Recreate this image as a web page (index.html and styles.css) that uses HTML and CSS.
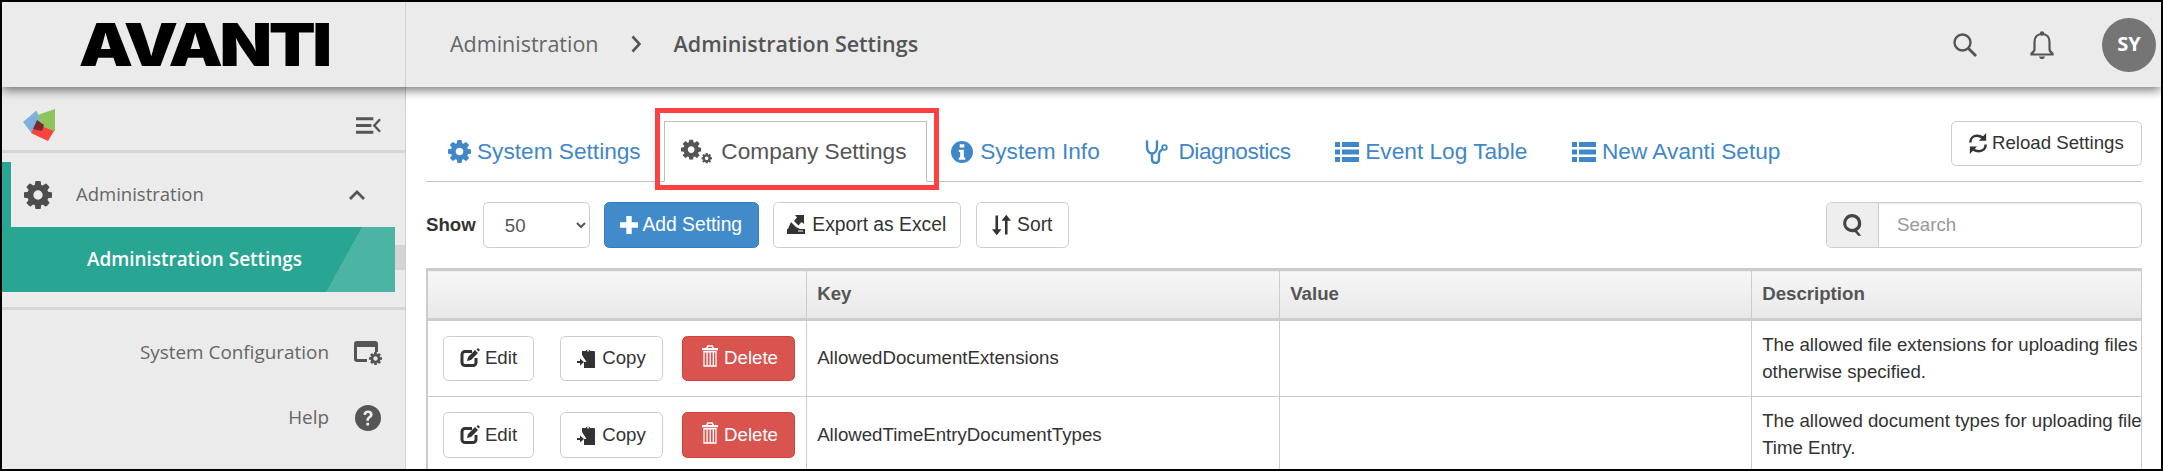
FILE: index.html
```html
<!DOCTYPE html>
<html lang="en">
<head>
<meta charset="utf-8">
<title>Administration Settings</title>
<link rel="stylesheet" href="styles.css">
</head>
<body>
<svg class="sprite" aria-hidden="true">
  <symbol id="i-cog" viewBox="128 128 1536 1536"><path fill-rule="evenodd" d="M1152 896q0-106-75-181t-181-75-181 75-75 181 75 181 181 75 181-75 75-181zm512-109v222q0 12-8 23t-20 13l-185 28q-19 54-39 91 35 50 107 138 10 12 10 25t-9 23q-27 37-99 108t-94 71q-12 0-26-9l-138-108q-44 23-91 38-16 136-29 186-7 28-36 28h-222q-14 0-24.500-8.500t-11.500-21.500l-28-184q-49-16-90-37l-141 107q-10 9-25 9-14 0-25-11-126-114-165-168-7-10-7-23 0-12 8-23 15-21 51-66.500t54-70.500q-27-50-41-99l-183-27q-13-2-21-12.500t-8-23.500v-222q0-12 8-23t19-13l186-28q14-46 39-92-40-57-107-138-10-12-10-24 0-10 9-23 26-36 98.500-107.500t94.500-71.500q13 0 26 10l138 107q44-23 91-38 16-136 29-186 7-28 36-28h222q14 0 24.500 8.500t11.500 21.500l28 184q49 16 90 37l142-107q9-9 24-9 13 0 25 10 129 119 165 170 7 8 7 22 0 12-8 23-15 21-51 66.500t-54 70.500q26 50 41 98l183 28q13 2 21 12.500t8 23.500z"/></symbol>
  <symbol id="i-cogs" viewBox="0 0 32 25"><use href="#i-cog" x="0" y="0" width="21" height="21"/><use href="#i-cog" x="21" y="14" width="11" height="11"/></symbol>
  <symbol id="i-list" viewBox="0 0 24 22"><path d="M0 1h5v5H0zM7 1h17v5H7zM0 8.500h5v5H0zM7 8.500h17v5H7zM0 16h5v5H0zM7 16h17v5H7z"/></symbol>
  <symbol id="i-info" viewBox="0 0 24 24"><path fill-rule="evenodd" d="M12 0a12 12 0 1 1 0 24a12 12 0 0 1 0-24zM9.500 3.500v3.500h5V3.500zM8.500 9.500v2.500h1.500v6H8.500v2.500h7V18H14V9.500z"/></symbol>
  <symbol id="i-steth" viewBox="0 0 23 24"><path fill="none" stroke="currentColor" stroke-width="2.400" stroke-linecap="round" d="M2 1.500v5c0 4 2 7 5 7s5-3 5-7v-5M7 13.500v5c0 3 1.500 4.500 3.500 4.500s3.500-1.500 3.500-4.500v-4.500c0-2 1-3 2.500-4"/><circle cx="19.500" cy="7.500" r="2.300" fill="none" stroke="currentColor" stroke-width="1.800"/></symbol>
  <symbol id="i-plus" viewBox="0 0 20 20"><path d="M7 0h6v7h7v6h-7v7H7v-7H0V7h7z"/></symbol>
  <symbol id="i-export" viewBox="0 0 18 19"><path fill-rule="evenodd" d="M0 14h18v5H0zM11 15.500v1h5v-1z"/><path d="M1 14l3-7 5 5 4 2zM8 0h9v9l-2.500-2-3 3.500-4.500-4.500 3-3.500z"/></symbol>
  <symbol id="i-sort" viewBox="0 0 22 24"><path d="M4 1h3v16h4l-5.500 7L0 17h4zM15 7h-4l5.500-7L22 7h-4v16h-3z"/></symbol>
  <symbol id="i-reload" viewBox="0 0 20 24"><path fill="none" stroke="currentColor" stroke-width="2.600" d="M2 11c0-4.500 3-7 7-7c3 0 5 1 7 3M18 13c0 4.500-3 7-7 7c-3 0-5-1-7-3"/><path d="M18.500 1v8h-7.500zM1.500 23v-8H9z"/></symbol>
  <symbol id="i-glass" viewBox="0 0 22 24"><path fill-rule="evenodd" d="M10 0a10 10 0 0 1 5.500 18.300L20 23.500l-3 .5-4-4.400A10 10 0 1 1 10 0zm0 3.500a6.500 6.500 0 1 0 0 13a6.500 6.500 0 0 0 0-13z"/></symbol>
  <symbol id="i-edit" viewBox="0 0 20 20"><path fill="none" stroke="currentColor" stroke-width="3" d="M12 3.500H5A3 3 0 0 0 2 6.500v8A3 3 0 0 0 5 17.500h8a3 3 0 0 0 3-3V10"/><path d="M7 13l1-4L15 2l3 3-7 7zM18 0l2 2-1.500 1.500-2-2z"/></symbol>
  <symbol id="i-copy" viewBox="0 0 18 20"><path d="M5 3h3.500a3 3 0 0 1 5 0H17a1 1 0 0 1 1 1v16H7v-6h2.500L5 7z"/><path fill="#fff" d="M10.300 2h1.600v1.500h-1.600z"/><path d="M0 13h3v-2.500l4 3.500-4 3.500V15H0z"/></symbol>
  <symbol id="i-trash" viewBox="0 0 18 24"><path fill-rule="evenodd" d="M6 0h6l1.500 3H18v2.500H0V3h4.500zM7 1.500L6.300 3h5.400L11 1.500zM1.500 6.500h15V24h-15zM3 8v14.500h2V8zm3.500 0v14.500h2V8zm3.500 0v14.500h2V8zm3.500 0v14.500h1.500V8z"/></symbol>
</svg>

<div class="frame">
  <header class="topbar">
    <div class="brand"><span class="wordmark">AVANTI</span></div>
    <nav class="crumbs">
      <span class="crumb">Administration</span>
      <svg class="crumb-sep" viewBox="0 0 10 18"><path d="M1.500 1.500L8.500 9l-7 7.500" fill="none" stroke="currentColor" stroke-width="2.600"/></svg>
      <span class="crumb-current">Administration Settings</span>
    </nav>
    <div class="top-actions">
      <svg class="top-search" viewBox="0 0 24 24"><circle cx="9.500" cy="9.500" r="8" fill="none" stroke="currentColor" stroke-width="2.400"/><path d="M15.500 15.500L23 23" stroke="currentColor" stroke-width="2.800" fill="none"/></svg>
      <svg class="top-bell" viewBox="0 0 24 28"><path d="M12 3c-5 0-7.500 3.500-7.500 8v7c0 2-1.500 3.500-3 4.500v1h21v-1c-1.500-1-3-2.500-3-4.500v-7c0-4.500-2.500-8-7.500-8z" fill="none" stroke="currentColor" stroke-width="2.200"/><circle cx="12" cy="2.500" r="2.200"/><path d="M9 25.500h6c-.5 2-1.500 2.500-3 2.500s-2.500-.5-3-2.500z"/></svg>
      <span class="avatar">SY</span>
    </div>
  </header>

  <div class="body">
    <aside class="sidebar">
      <div class="side-top">
        <svg class="mark" viewBox="0 0 32 32">
          <path d="M13.500 1.500L0 13l8.500 11 10-11z" fill="#7db0dc"/>
          <path d="M14.500 6L32 0l0 22-10 1z" fill="#8fc45c"/>
          <path d="M13 15l18 7-6 10-17-8z" fill="#f8453d"/>
          <path d="M14 11l7 5-2 6-9-2z" fill="#7a2a2c"/>
        </svg>
        <svg class="collapse" viewBox="0 0 26 17"><path d="M0 1.500h18M0 8.500h16M0 15.500h18" stroke="currentColor" stroke-width="3" fill="none"/><path d="M25 2l-6 6.500 6 6.500" stroke="currentColor" stroke-width="2.400" fill="none"/></svg>
      </div>
      <div class="side-group">
        <div class="side-item">
          <svg class="side-cog"><use href="#i-cog"/></svg>
          <span class="side-label">Administration</span>
          <svg class="side-caret" viewBox="0 0 16 10"><path d="M1 9l7-7 7 7" fill="none" stroke="currentColor" stroke-width="2.800"/></svg>
        </div>
        <div class="side-sub">
          <span class="side-sub-label">Administration Settings</span>
        </div>
        <span class="side-thumb"></span>
      </div>
      <div class="side-links">
        <div class="side-link">
          <span>System Configuration</span>
          <svg class="side-link-icon" viewBox="0 0 28 24"><path d="M3 0h18a3 3 0 0 1 3 3v8h-3V6H3v12h10v3H3a3 3 0 0 1-3-3V3a3 3 0 0 1 3-3z"/><use href="#i-cog" x="15" y="11" width="13" height="13"/></svg>
        </div>
        <div class="side-link">
          <span>Help</span>
          <svg class="side-link-icon" viewBox="0 0 28 28"><circle cx="14" cy="14" r="14"/><path d="M9 10.500c.3-3 2.300-4.500 5-4.500 3 0 5 1.700 5 4.200 0 3.600-4 3.500-4 6.800h-2.800c0-4.500 3.800-4.400 3.800-6.700 0-1-.8-1.700-2-1.700s-1.800.7-2.100 2.200zM12.200 19h3v3h-3z" fill="#ebebeb"/></svg>
        </div>
      </div>
    </aside>

    <main class="content">
      <div class="tabbar">
        <ul class="tabs">
          <li class="tab"><svg class="ti ti-cog"><use href="#i-cog"/></svg>System Settings</li>
          <li class="tab tab-active"><svg class="ti ti-cogs"><use href="#i-cogs"/></svg>Company Settings</li>
          <li class="tab"><svg class="ti ti-info"><use href="#i-info"/></svg>System Info</li>
          <li class="tab tab-tight"><svg class="ti ti-steth"><use href="#i-steth"/></svg>Diagnostics</li>
          <li class="tab"><svg class="ti ti-list"><use href="#i-list"/></svg>Event Log Table</li>
          <li class="tab"><svg class="ti ti-list"><use href="#i-list"/></svg>New Avanti Setup</li>
        </ul>
        <button class="btn btn-reload"><svg class="bi bi-reload"><use href="#i-reload"/></svg>Reload Settings</button>
        <span class="callout"></span>
      </div>

      <div class="toolbar">
        <label class="show">Show</label>
        <select class="page-size"><option>50</option></select>
        <button class="btn btn-primary btn-add"><svg class="bi bi-plus"><use href="#i-plus"/></svg>Add Setting</button>
        <button class="btn btn-export"><svg class="bi bi-export"><use href="#i-export"/></svg>Export as Excel</button>
        <button class="btn btn-sort"><svg class="bi bi-sort"><use href="#i-sort"/></svg>Sort</button>
        <div class="search">
          <span class="search-addon"><svg class="search-glass"><use href="#i-glass"/></svg></span>
          <input class="search-input" placeholder="Search">
        </div>
      </div>

      <div class="table-wrap">
        <table class="grid">
          <colgroup><col class="c-act"><col class="c-key"><col class="c-val"><col class="c-desc"></colgroup>
          <thead>
            <tr><th></th><th>Key</th><th>Value</th><th>Description</th></tr>
          </thead>
          <tbody>
            <tr>
              <td class="actions"><button class="btn btn-edit"><svg class="bi bi-edit"><use href="#i-edit"/></svg>Edit</button><button class="btn btn-copy"><svg class="bi bi-copy"><use href="#i-copy"/></svg>Copy</button><button class="btn btn-danger"><svg class="bi bi-trash"><use href="#i-trash"/></svg>Delete</button></td>
              <td>AllowedDocumentExtensions</td>
              <td></td>
              <td>The allowed file extensions for uploading files<br>otherwise specified.</td>
            </tr>
            <tr>
              <td class="actions"><button class="btn btn-edit"><svg class="bi bi-edit"><use href="#i-edit"/></svg>Edit</button><button class="btn btn-copy"><svg class="bi bi-copy"><use href="#i-copy"/></svg>Copy</button><button class="btn btn-danger"><svg class="bi bi-trash"><use href="#i-trash"/></svg>Delete</button></td>
              <td>AllowedTimeEntryDocumentTypes</td>
              <td></td>
              <td>The allowed document types for uploading files<br>Time Entry.</td>
            </tr>
          </tbody>
        </table>
      </div>
    </main>
  </div>
</div>
</body>
</html>
```

FILE: styles.css
```css
* { box-sizing: border-box; }
html, body { margin: 0; height: 100%; overflow: hidden; background: #fff; }
body { font-family: "Liberation Sans", Arial, sans-serif; font-size: 18.67px; line-height: 26.67px; color: #333; }
.sprite { display: none; }
svg { fill: currentColor; flex: none; }

.frame { height: 471px; border: 2px solid #000; overflow: hidden; display: flex; flex-direction: column; }

.topbar { height: 85px; flex: none; display: flex; align-items: center; background: #ebebeb; position: relative; z-index: 2; box-shadow: 0 3px 10px rgba(0,0,0,.55); font-family: "Open Sans", sans-serif; color: #555; }
.brand { width: 404px; height: 100%; flex: none; display: flex; align-items: center; justify-content: center; border-right: 1px solid #cfcfcf; }
.wordmark { font-family: Inter, sans-serif; font-weight: 900; font-size: 59px; line-height: 1; color: #000; letter-spacing: -3px; transform: scaleX(1.16); }
.crumbs { display: flex; align-items: center; padding-left: 44px; font-size: 21.5px; }
.crumb { color: #666; }
.crumb-sep { width: 10px; height: 18px; margin: 0 33px 0 32px; color: #555; }
.crumb-current { font-weight: 600; color: #555; }
.top-actions { margin-left: auto; padding-right: 5px; display: flex; align-items: center; color: #555; }
.top-search { width: 24px; height: 24px; margin-right: 53px; }
.top-bell { width: 24px; height: 28px; margin-right: 48px; }
.avatar { width: 54px; height: 54px; border-radius: 50%; background: #757575; color: #fff; font-weight: 700; font-size: 20px; display: flex; align-items: center; justify-content: center; }

.body { flex: 1; display: flex; min-height: 0; }

.sidebar { width: 404px; flex: none; background: #ebebeb; border-right: 1px solid #cfcfcf; font-family: "Open Sans", sans-serif; color: #666; }
.side-top { height: 66px; display: flex; align-items: center; justify-content: space-between; padding: 13px 24px 0 21px; border-bottom: 3px solid #d6d6d6; }
.mark { width: 32px; height: 32px; }
.collapse { width: 25px; height: 17px; color: #555; }
.side-group { position: relative; margin-top: 9px; padding-bottom: 15px; border-bottom: 3px solid #d6d6d6; }
.side-item { width: 393px; height: 65px; display: flex; align-items: center; border-left: 9px solid #29a594; padding-left: 13px; font-size: 18.5px; }
.side-cog { width: 28px; height: 28px; color: #4d4d4d; }
.side-label { margin-left: 24px; }
.side-caret { width: 16px; height: 10px; margin-left: auto; margin-right: 30px; color: #555; }
.side-sub { width: 393px; height: 65px; display: flex; align-items: center; padding-left: 85px; color: #fff; background: linear-gradient(119deg, #29a594 315px, #4cb4a5 315px); font-size: 18.9px; font-weight: 600; }
.side-thumb { position: absolute; left: 393px; top: 83px; width: 10px; height: 25px; background: #d4d4d4; }
.side-links { padding: 10px 23px 0 0; }
.side-link { height: 65px; display: flex; align-items: center; justify-content: flex-end; gap: 25px; font-size: 18.9px; color: #666; }
.side-link-icon { width: 28px; height: 26px; color: #555; }

.content { flex: 1; min-width: 0; padding: 34px 19px 0 20px; background: #fff; }
.tabbar { position: relative; height: 61px; display: flex; justify-content: space-between; align-items: flex-start; border-bottom: 1px solid #c0c0c0; }
.tabs { list-style: none; margin: 0; padding: 0; display: flex; }
.tab { height: 61px; display: flex; align-items: center; padding: 0 21px; margin-right: 2.67px; font-size: 22.67px; color: #3f87c8; white-space: nowrap; }
.tab:first-child { padding-left: 22px; }
.tab-active { padding: 0 20px 0 16px; color: #555; border: 1px solid #bdbdbd; border-bottom-color: #fff; background: #fff; }
.tab-tight { letter-spacing: -.45px; }
.ti { margin-right: 6px; }
.ti-cog { width: 23px; height: 23px; }
.ti-cogs { width: 31px; height: 25px; margin-right: 9px; }
.ti-info { width: 22px; height: 22px; margin-right: 7px; }
.ti-steth { width: 23px; height: 24px; margin: 0 10px 0 1px; }
.ti-list { width: 24px; height: 22px; margin-right: 6px; }
.callout { position: absolute; left: 229px; top: -13px; width: 284px; height: 82px; border: 5px solid #ff4040; }

.btn { height: 45.33px; padding: 0 15px; display: inline-flex; align-items: center; font: inherit; color: #333; background: #fff; border: 1px solid #ccc; border-radius: 5.33px; white-space: nowrap; }
.bi { width: 19px; height: 19px; margin-right: 5px; }
.btn-reload { width: 191px; padding: 0 0 0 16px; }
.bi-reload { width: 20px; height: 23px; margin-right: 4px; }
.bi-plus { width: 18px; height: 18px; margin-right: 4px; }
.bi-export { width: 18px; height: 19px; margin-right: 7px; }
.bi-sort { width: 19px; height: 22px; margin-right: 6px; }
.bi-edit { width: 20px; height: 20px; margin-right: 5px; }
.bi-copy { width: 18px; height: 20px; margin-right: 7px; }
.bi-trash { width: 16px; height: 22px; margin: -4px 6px 0 3px; }

.toolbar { display: flex; align-items: center; gap: 14px; margin-top: 20px; height: 46px; }
.show { font-weight: 700; margin-right: -7px; }
.page-size { width: 107px; height: 46px; padding-left: 17px; font: inherit; color: #555; background: #fff; border: 1px solid #ccc; border-radius: 5.33px; }
.toolbar .btn { font-size: 19.3px; justify-content: center; padding: 0; }
.btn-add { width: 155px; }
.btn-export { width: 188px; margin-right: 1px; }
.btn-sort { width: 93px; }
.btn-primary { color: #fff; background: #428bca; border-color: #357ebd; }
.toolbar .btn-primary { color: #fff; }
.search { margin-left: auto; width: 316px; height: 46px; display: flex; border: 1px solid #ccc; border-radius: 5.33px; overflow: hidden; box-shadow: inset 0 1px 1px rgba(0,0,0,.08); }
.search-addon { width: 52px; flex: none; display: flex; align-items: center; justify-content: center; background: #eee; border-right: 1px solid #ccc; }
.search-glass { width: 20px; height: 22px; color: #444; }
.search-input { flex: 1; min-width: 0; border: 0; padding: 0 18px; font: inherit; background: transparent; outline: 0; }
.search-input::placeholder { color: #999; }

.table-wrap { margin-top: 20px; overflow: hidden; border-right: 1px solid #ccc; }
.grid { border-collapse: collapse; table-layout: fixed; width: 2200px; }
.c-act { width: 379px; }
.c-key { width: 473px; }
.c-val { width: 472px; }
.grid th { height: 50px; padding: 0 10.67px; text-align: left; font-weight: 700; color: #555; border: 1px solid #ccc; border-top-width: 3px; border-bottom-width: 3px; background: linear-gradient(#f6f6f6, #e8e8e8); }
.grid th:first-child, .grid td:first-child { border-left-width: 2px; }
.grid td { height: 77px; padding: 10.67px; vertical-align: middle; border: 1px solid #ccc; white-space: nowrap; }
.grid td.actions { padding: 0 0 0 15px; font-size: 0; }
.actions .btn { font-size: 18.67px; vertical-align: middle; justify-content: center; padding: 0; }
.btn-edit { width: 91px; margin-right: 26px; }
.btn-copy { width: 103px; margin-right: 19px; }
.btn-danger { width: 113px; border-color: #d43f3a; background: #d9534f; }
.actions .btn-danger { color: #fff; }
```
